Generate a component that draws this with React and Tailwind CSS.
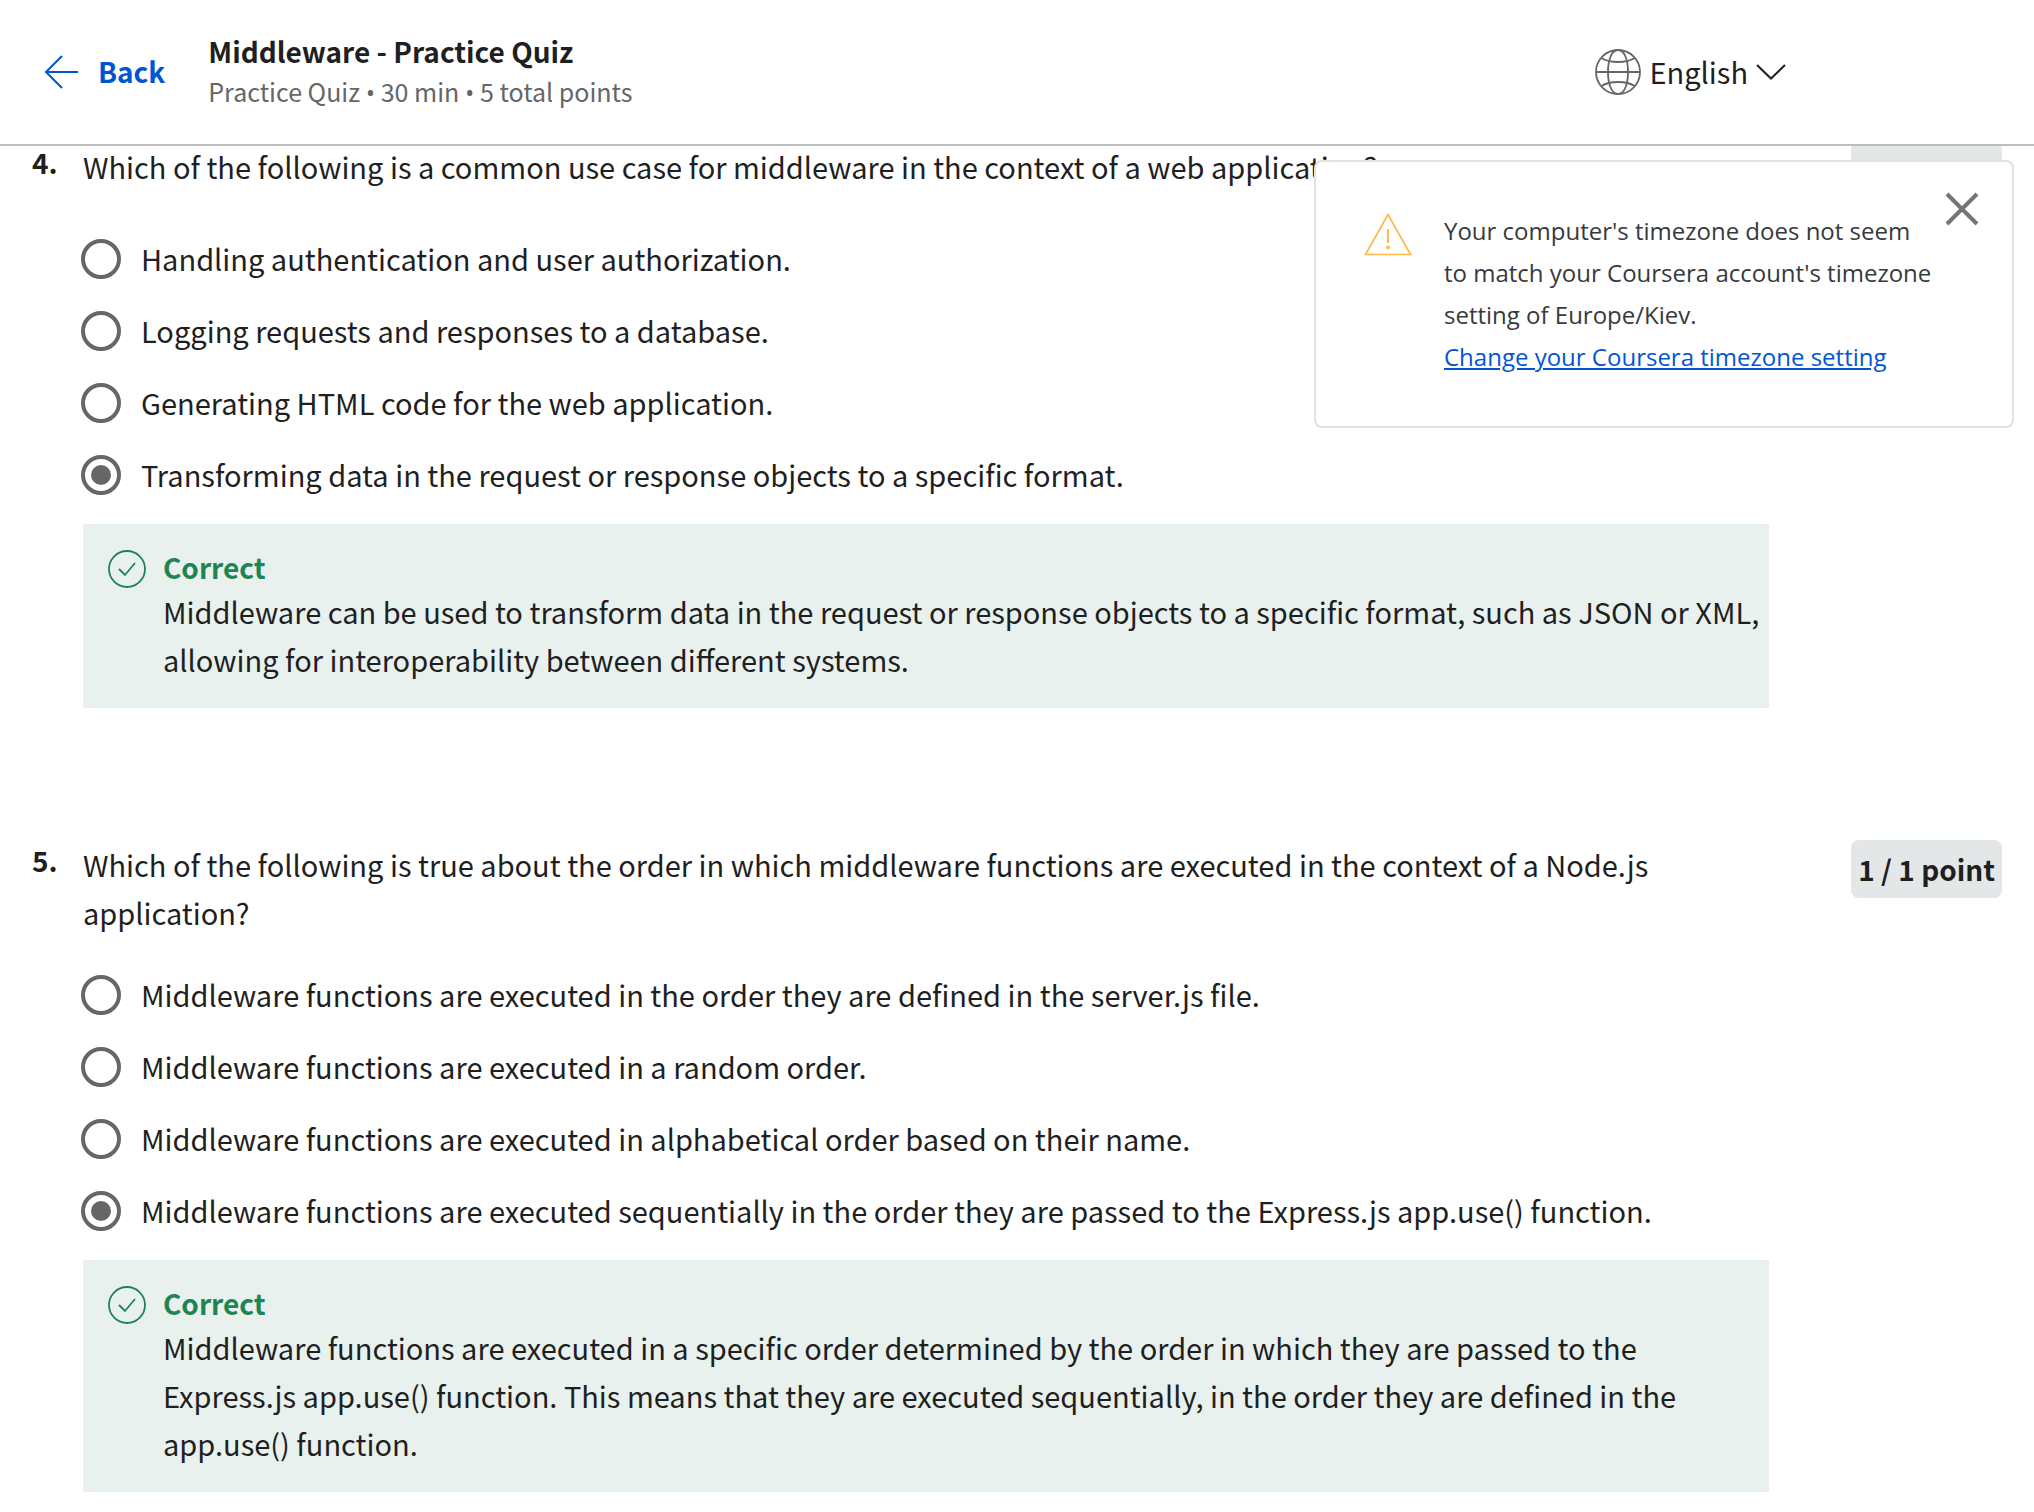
const questions = [
  {
    number: 4,
    prompt:
      'Which of the following is a common use case for middleware in the context of a web application?',
    options: [
      'Handling authentication and user authorization.',
      'Logging requests and responses to a database.',
      'Generating HTML code for the web application.',
      'Transforming data in the request or response objects to a specific format.',
    ],
    selected: 3,
    feedback:
      'Middleware can be used to transform data in the request or response objects to a specific format, such as JSON or XML, allowing for interoperability between different systems.',
  },
  {
    number: 5,
    prompt:
      'Which of the following is true about the order in which middleware functions are executed in the context of a Node.js application?',
    options: [
      'Middleware functions are executed in the order they are defined in the server.js file.',
      'Middleware functions are executed in a random order.',
      'Middleware functions are executed in alphabetical order based on their name.',
      'Middleware functions are executed sequentially in the order they are passed to the Express.js app.use() function.',
    ],
    selected: 3,
    feedback:
      'Middleware functions are executed in a specific order determined by the order in which they are passed to the Express.js app.use() function. This means that they are executed sequentially, in the order they are defined in the app.use() function.',
  },
];

function ArrowLeft() {
  return (
    <svg viewBox="0 0 34 36" className="h-9 w-[34px] shrink-0" fill="none" stroke="currentColor" strokeWidth="2" aria-hidden="true">
      <path d="M18 2 2 18l16 16M2 18h32" />
    </svg>
  );
}

function Globe() {
  return (
    <svg viewBox="0 0 46 46" className="size-[46px] shrink-0 text-[#666]" fill="none" stroke="currentColor" strokeWidth="1.8" aria-hidden="true">
      <circle cx="23" cy="23" r="22" />
      <path d="M1 23h44" />
      <path d="M23 1c-6.500 0-10 10-10 22s3.500 22 10 22 10-10 10-22S29.500 1 23 1Z" />
      <path d="M6.500 9c4.500 3 10 4 16.500 4s12-1 16.500-4" />
      <path d="M6.500 37c4.500-3 10-4 16.500-4s12 1 16.500 4" />
    </svg>
  );
}

function ChevronDown() {
  return (
    <svg viewBox="0 0 30 16" className="h-4 w-[30px] shrink-0" fill="none" stroke="currentColor" strokeWidth="2" aria-hidden="true">
      <path d="M1 1l14 13.500L29 1" />
    </svg>
  );
}

function CheckCircle() {
  return (
    <svg viewBox="0 0 38 38" className="mt-[3px] size-[38px] shrink-0 text-[#1f8354]" fill="none" stroke="currentColor" strokeWidth="1.8" aria-hidden="true">
      <circle cx="19" cy="19" r="18" />
      <path d="M11 19l6 6L27 13" />
    </svg>
  );
}

function Warning() {
  return (
    <svg viewBox="0 0 48 44" className="mt-0.5 h-11 w-12 shrink-0 text-[#ffb94f]" fill="none" stroke="currentColor" aria-hidden="true">
      <path d="M24 2.500 1.500 42.500h45Z" strokeWidth="1.700" />
      <path d="M24 17v14" strokeWidth="2" />
      <circle cx="24" cy="35.500" r="1.900" fill="currentColor" stroke="none" />
    </svg>
  );
}

function Bullet() {
  return <span className="font-['Open_Sans',sans-serif]">•</span>;
}

function Header() {
  return (
    <header className="fixed inset-x-0 top-0 z-10 flex h-[146px] items-center border-b-2 border-[#bdbdbd] bg-white pr-[248px] pl-11">
      <a href="#back" className="flex items-center gap-5 text-[28px] font-bold text-[#0056d2]">
        <ArrowLeft />
        <span className="pb-0.5">Back</span>
      </a>
      <div className="ml-[43px] min-w-0 flex-1 pb-0.5">
        <h1 className="text-[28px] leading-10 font-bold">Middleware - Practice Quiz</h1>
        <p className="text-[25px] leading-10 text-[#666]">
          Practice Quiz <Bullet /> 30 min <Bullet /> 5 total points
        </p>
      </div>
      <label className="flex items-center gap-2">
        <Globe />
        <select aria-label="Language" className="field-sizing-content appearance-none bg-transparent pb-0.5 text-[29px]">
          <option>English</option>
        </select>
        <ChevronDown />
      </label>
    </header>
  );
}

function TimezoneNotice() {
  return (
    <aside className="fixed top-40 right-5 z-20 flex h-[268px] w-[700px] items-start rounded-lg border-2 border-[#e1e1e1] bg-white pt-12 pr-[33px] pl-12 font-['Open_Sans',sans-serif] text-2xl leading-[42px] text-[#373a3c]">
      <Warning />
      <p className="ml-8 flex-1 whitespace-nowrap">
        Your computer's timezone does not seem
        <br />
        to match your Coursera account's timezone
        <br />
        setting of Europe/Kiev.
        <br />
        <a href="#timezone" className="text-[#0056d2] underline">
          Change your Coursera timezone setting
        </a>
      </p>
      <button type="button" aria-label="Close" className="-mt-[18px] -ml-10 text-[#757575]">
        <svg viewBox="0 0 34 34" className="size-[34px]" fill="none" stroke="currentColor" strokeWidth="4" aria-hidden="true">
          <path d="M2 2l30 30M32 2L2 32" />
        </svg>
      </button>
    </aside>
  );
}

function Question({ number, prompt, options, selected, feedback }) {
  const name = `question-${number}`;
  return (
    <section>
      <div className="flex items-start">
        <span className="w-[51px] shrink-0 text-[28px] leading-10 font-bold">{number}.</span>
        <p id={name} className="min-w-0 flex-1 pr-40">{prompt}</p>
        <span className="shrink-0 rounded-lg bg-[#e3e7e8] px-[7px] text-[28px] leading-[58px] font-bold">1 / 1 point</span>
      </div>
      <div className="mr-[233px] ml-[51px]">
        <div role="radiogroup" aria-labelledby={name} className="-ml-0.5 flex flex-col gap-6 pt-[35px] pb-[25px]">
          {options.map((option, index) => (
            <label key={option} className="flex items-center gap-5">
              <input
                type="radio"
                name={name}
                defaultChecked={index === selected}
                className="grid size-10 shrink-0 appearance-none place-content-center rounded-full border-4 border-[#666] before:size-5 before:rounded-full checked:before:bg-[#666]"
              />
              <span className="pb-0.5 leading-[46px]">{option}</span>
            </label>
          ))}
        </div>
        <div className="flex gap-[17px] bg-[#e8f1ee] pt-[23px] pr-1 pb-[25px] pl-[25px]">
          <CheckCircle />
          <div>
            <p className="text-[28px] leading-10 font-bold text-[#1f8354]">Correct</p>
            <p>{feedback}</p>
          </div>
        </div>
      </div>
    </section>
  );
}

export default function App() {
  return (
    <div className="min-h-screen bg-white font-['Noto_Sans_CJK_SC',sans-serif] text-[29px] leading-[48px] text-[#1f1f1f]">
      <Header />
      <TimezoneNotice />
      <main className="flex flex-col gap-[132px] px-8 pt-[142px] pb-5">
        {questions.map((question) => (
          <Question key={question.number} {...question} />
        ))}
      </main>
    </div>
  );
}
